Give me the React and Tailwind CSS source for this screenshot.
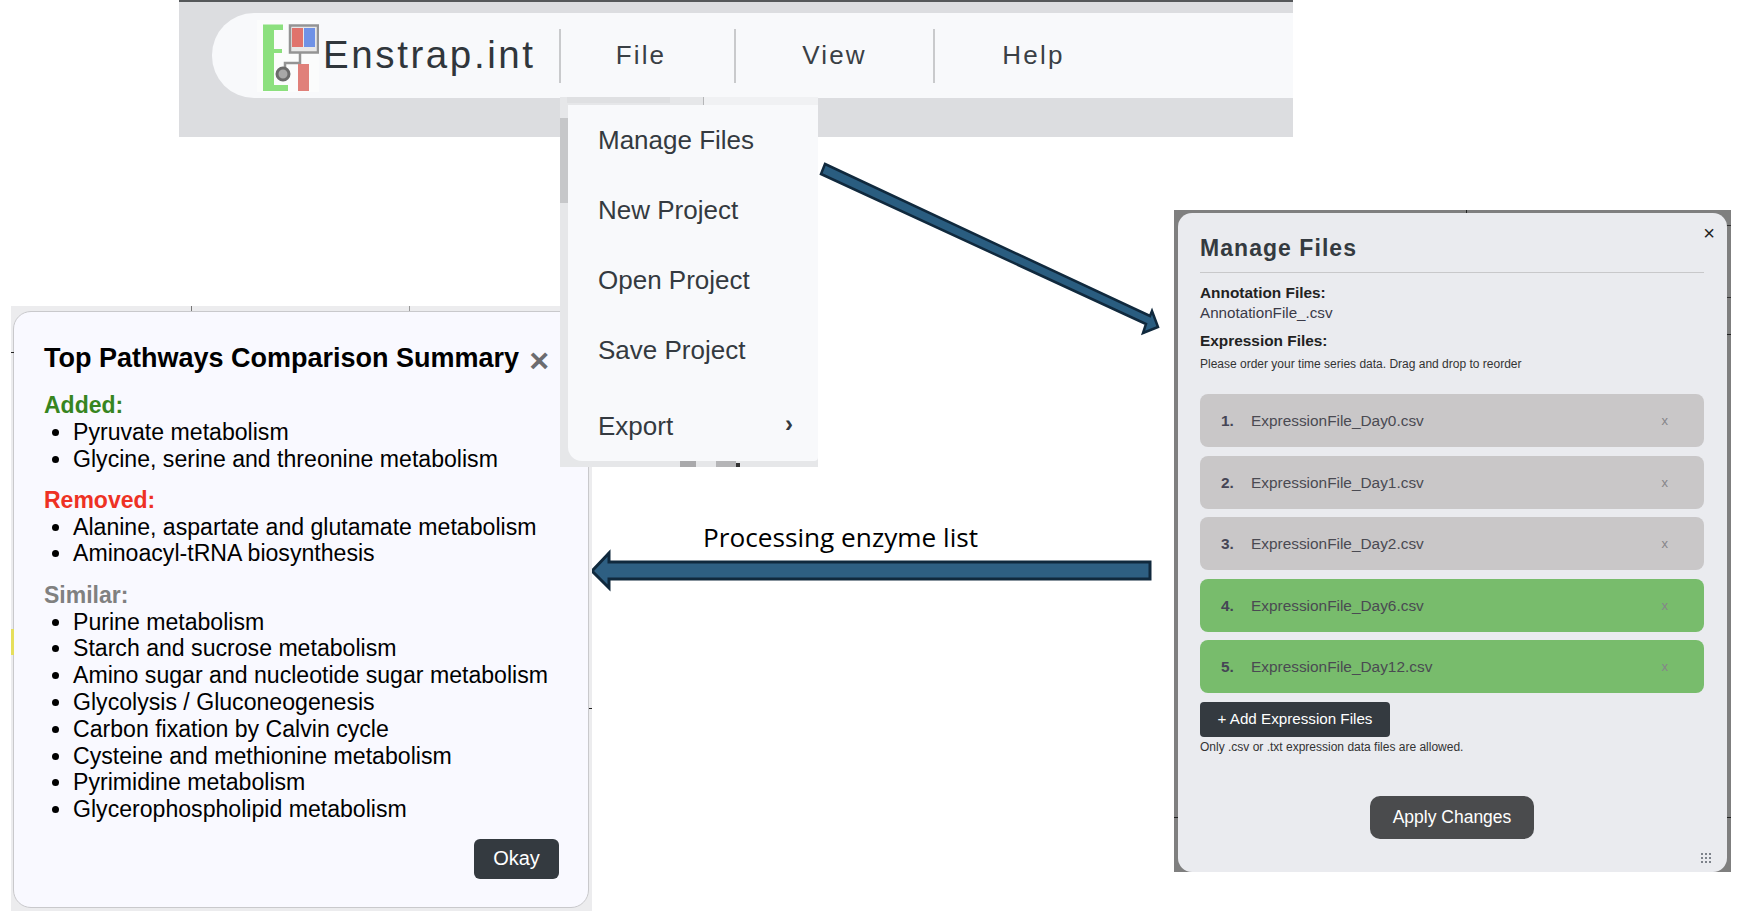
const manageRows = [
  { n: 1, name: 'ExpressionFile_Day0.csv', color: 'bg-[#c9c7c8]' },
  { n: 2, name: 'ExpressionFile_Day1.csv', color: 'bg-[#c9c7c8]' },
  { n: 3, name: 'ExpressionFile_Day2.csv', color: 'bg-[#c9c7c8]' },
  { n: 4, name: 'ExpressionFile_Day6.csv', color: 'bg-[#78bc6c]' },
  { n: 5, name: 'ExpressionFile_Day12.csv', color: 'bg-[#78bc6c]' },
]

const added = ['Pyruvate metabolism', 'Glycine, serine and threonine metabolism']
const removed = ['Alanine, aspartate and glutamate metabolism', 'Aminoacyl-tRNA biosynthesis']
const similar = [
  'Purine metabolism',
  'Starch and sucrose metabolism',
  'Amino sugar and nucleotide sugar metabolism',
  'Glycolysis / Gluconeogenesis',
  'Carbon fixation by Calvin cycle',
  'Cysteine and methionine metabolism',
  'Pyrimidine metabolism',
  'Glycerophospholipid metabolism',
]

// bits of the cropped page that show around the screenshots: x, y, w, h, fill
const scraps = [
  [1466, 210, 1, 3, '#222'],
  [1727, 225, 4, 1, '#333'],
  [1727, 297, 4, 1, '#333'],
  [1727, 334, 4, 1, '#222'],
  [1174, 817, 4, 1, '#222'],
  [1727, 817, 4, 1, '#222'],
  [191, 306, 1, 5, '#777'],
  [409, 306, 1, 5, '#999'],
  [11, 352, 3, 1, '#222'],
  [11, 629, 3, 26, '#e6df5c'],
  [589, 708, 3, 1, '#222'],
  [567, 97, 103, 6, '#dfe0e2'],
  [704, 97, 114, 8, '#f0f1f3'],
  [703, 97, 1, 8, '#b5b6b8'],
  [560, 118, 8, 85, '#c6c7c9'],
  [680, 461, 16, 6, '#a9a9ab'],
  [716, 461, 20, 6, '#b5b5b7'],
  [736, 463, 4, 4, '#333'],
]

const Logo = () => (
  <svg width="62" height="72" viewBox="0 0 62 72" className="shrink-0 blur-[0.5px]">
    <rect x="0" y="0" width="62" height="72" fill="#fbfcfc" />
    <path d="M6 4.5h20V10H17v19h8v4H17v32h14v6H6z" fill="#8ce07e" />
    <rect x="33" y="5.5" width="28" height="27" fill="#e8e8e8" stroke="#949494" strokeWidth="2.5" />
    <rect x="35" y="8" width="11" height="19" fill="#e0736c" />
    <rect x="47" y="8" width="11" height="19" fill="#6f92e6" />
    <path d="M43 33v10H28v5" fill="none" stroke="#949494" strokeWidth="2.5" />
    <circle cx="26" cy="54" r="6" fill="#a8a8a8" stroke="#6b6b6b" strokeWidth="3" />
    <rect x="41" y="44" width="11" height="27" fill="#e0807a" />
  </svg>
)

const Bullets = ({ items }) => (
  <ul className="list-disc pl-[29px] text-[23.1px] leading-[26.8px] text-black">
    {items.map((t) => (
      <li key={t}>{t}</li>
    ))}
  </ul>
)

export default function App() {
  return (
    <div className="relative w-[1742px] h-[924px] overflow-hidden bg-white font-['Liberation_Sans',Arial,sans-serif]">
      {/* app header crop */}
      <div className="absolute left-[179px] top-0 w-[1114px] h-[137px] bg-[#dcdde0] border-t-2 border-[#55585a] pt-[11px]">
        <div className="ml-[33px] h-[85px] rounded-l-[42px] bg-[#f8f9fb] flex items-center pl-[50px]">
          <div className="w-[62px] -ml-[5px] mr-[4px]">
            <Logo />
          </div>
          <span className="text-[38.5px] tracking-[2.6px] text-[#30363b] w-[236px] leading-none">Enstrap.int</span>
          <div className="h-[54px] w-[2px] bg-[#c9cacc]" />
          <span className="w-[160px] text-center text-[26px] tracking-[2.1px] text-[#3a4045] mr-[13px]">File</span>
          <div className="h-[54px] w-[2px] bg-[#c9cacc]" />
          <span className="w-[197px] text-center text-[26px] tracking-[2.2px] text-[#3a4045]">View</span>
          <div className="h-[54px] w-[2px] bg-[#c9cacc]" />
          <span className="w-[197px] text-center text-[26px] tracking-[2.2px] text-[#3a4045]">Help</span>
        </div>
      </div>

      {/* arrows */}
      <svg className="absolute left-0 top-0 pointer-events-none" width="1742" height="924">
        <polygon
          points="825,164 1150,316 1152,311 1158,327 1143,333 1146,324 821,174"
          fill="#2a5d80"
          stroke="#10293d"
          strokeWidth="2.5"
        />
        <polygon
          points="592,571 609,553 609,562 1150,562 1150,579 609,579 609,588"
          fill="#2e5f82"
          stroke="#10293d"
          strokeWidth="3"
        />
      </svg>
      <div className="absolute left-[703px] top-[519px] text-[26.2px] leading-[36px] text-black font-['Open_Sans',sans-serif]">
        Processing enzyme list
      </div>

      {/* manage files modal */}
      <div className="absolute left-[1174px] top-[210px] w-[557px] h-[662px] bg-[#7f7f7f] pl-[4px] pt-[3px] pr-[4px]">
        <div className="relative h-[659px] rounded-[14px] bg-[#eaebef] pt-[20px] pl-[22px] pr-[23px]">
          <button className="absolute right-[12px] top-[10px] text-[20px] leading-[20px] text-[#222]">×</button>
          <h2 className="text-[23px] leading-[30px] tracking-[1.05px] font-bold text-[#343a40] pb-[9px] border-b border-[#c8c8ca]">
            Manage Files
          </h2>
          <div className="mt-[10px] text-[15.4px] leading-[20px] font-bold text-[#222]">Annotation Files:</div>
          <div className="text-[15.2px] leading-[20px] text-[#3a3a48]">AnnotationFile_.csv</div>
          <div className="mt-[8px] text-[15.4px] leading-[20px] font-bold text-[#222]">Expression Files:</div>
          <div className="mt-[5px] text-[12px] leading-[16px] text-[#333]">Please order your time series data. Drag and drop to reorder</div>
          <div className="mt-[22px] flex flex-col gap-[8.5px]">
            {manageRows.map((r) => (
              <div key={r.n} className={`${r.color} h-[53px] rounded-[8px] flex items-center pl-[21px] pr-[36px] pt-[1px] text-[15.4px] text-[#4a4a52]`}>
                <span className="w-[30px] font-bold text-[#454555]">{r.n}.</span>
                <span className="flex-1">{r.name}</span>
                <span className="text-[13px] text-[#85858a]">x</span>
              </div>
            ))}
          </div>
          <button className="mt-[9px] block h-[35px] w-[190px] rounded-[4px] bg-[#343a40] text-center text-[15.2px] text-white">
            + Add Expression Files
          </button>
          <div className="mt-[2px] text-[12px] leading-[16px] text-[#333]">Only .csv or .txt expression data files are allowed.</div>
          <div className="mt-[41px] flex justify-center">
            <button className="h-[43px] w-[164px] rounded-[10px] bg-[#4a4b4d] text-[17.5px] text-white">Apply Changes</button>
          </div>
          <svg className="absolute right-[15px] bottom-[8px]" width="12" height="12" viewBox="0 0 12 12" fill="#7d828a">
            {[1, 5, 9].map((y) => [1, 5, 9].map((x) => <rect key={`${x}-${y}`} x={x} y={y} width="2" height="2" />))}
          </svg>
        </div>
      </div>

      {/* pathways summary modal */}
      <div className="absolute left-[11px] top-[306px] w-[581px] h-[605px] bg-[#ececee] pl-[2px] pt-[5px] pr-[3px]">
        <div className="relative h-[597px] rounded-[18px] border border-[#c9c9cc] bg-[#f9f9ff] pt-[30px] pl-[30px] pr-[29px]">
          <button className="absolute right-[39px] top-[30px] text-[34px] leading-[36px] font-bold text-[#6c6c70]">×</button>
          <h2 className="mb-[18px] text-[27px] leading-[32px] font-bold text-black whitespace-nowrap">Top Pathways Comparison Summary</h2>
          <div className="text-[23px] leading-[27px] font-bold text-[#37851f]">Added:</div>
          <Bullets items={added} />
          <div className="mt-[14px] text-[23px] leading-[27px] font-bold text-[#ee3124]">Removed:</div>
          <Bullets items={removed} />
          <div className="mt-[14.5px] text-[23px] leading-[27px] font-bold text-[#808080]">Similar:</div>
          <Bullets items={similar} />
          <div className="mt-[16px] flex justify-end">
            <button className="h-[40px] w-[85px] rounded-[6px] bg-[#343a40] pb-[2px] text-[20px] text-white">Okay</button>
          </div>
        </div>
      </div>

      {/* file menu, sits on top of the summary modal */}
      <div className="absolute left-[560px] top-[97px] w-[258px] h-[370px] bg-[#e6e7e9] pl-[8px] pt-[8px]">
        <div className="h-[356px] rounded-bl-[14px] rounded-br-[4px] bg-[#f8f9fb] pl-[30px] pr-[25px] text-[26px] text-[#343a40]">
          <div className="h-[70px] flex items-center">Manage Files</div>
          <div className="h-[70px] flex items-center">New Project</div>
          <div className="h-[70px] flex items-center">Open Project</div>
          <div className="h-[70px] flex items-center">Save Project</div>
          <div className="h-[70px] mt-[6px] flex items-center justify-between">
            <span>Export</span>
            <span className="text-[24px] font-bold leading-none pb-[4px]">›</span>
          </div>
        </div>
      </div>

      <svg className="absolute left-0 top-0 pointer-events-none" width="1742" height="924">
        {scraps.map(([x, y, w, h, fill]) => (
          <rect key={`${x}-${y}`} x={x} y={y} width={w} height={h} fill={fill} />
        ))}
      </svg>
    </div>
  )
}
